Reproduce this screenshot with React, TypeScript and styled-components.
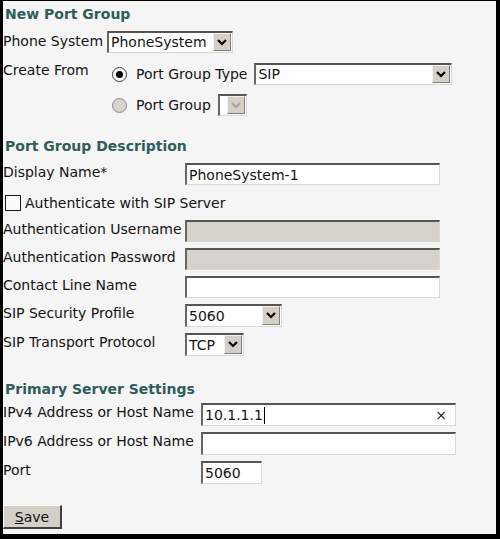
import React from 'react';
import styled, { createGlobalStyle } from 'styled-components';

const Global = createGlobalStyle`
  html, body { margin: 0; padding: 0; background: #000; }
  body { font-family: "DejaVu Sans", Verdana, sans-serif; font-size: 14px; color: #141414; }
`;

const Frame = styled.div`
  box-sizing: border-box;
  width: 500px;
  height: 539px;
  border-style: solid;
  border-color: #000;
  border-width: 1px 4px 5px 3px;
  background: #f5f5f5;
  display: flex;
  flex-direction: column;
  overflow: hidden;
`;

const Heading = styled.div<{ $top: number }>`
  margin: ${p => p.$top}px 0 0 2px;
  font-weight: bold;
  color: #2f5c5c;
  line-height: 18px;
`;

const Grid = styled.div<{ $label: number; $top: number; $gap: number }>`
  display: grid;
  grid-template-columns: ${p => p.$label}px 1fr;
  row-gap: ${p => p.$gap}px;
  margin-top: ${p => p.$top}px;
  align-items: start;
`;

const Label = styled.div<{ $offset?: number }>`
  line-height: 18px;
  white-space: nowrap;
  margin-top: ${p => p.$offset ?? 0}px;
`;

const Full = styled.div`
  grid-column: 1 / -1;
  display: flex;
  align-items: center;
  height: 23px;
  margin-left: 2px;
  gap: 4px;
`;

const Check = styled.span`
  box-sizing: border-box;
  width: 16px;
  height: 16px;
  border: 1px solid #1a1a1a;
  background: #fbfbfb;
`;

const Field = styled.div<{ $w: number; $h?: number; $disabled?: boolean }>`
  box-sizing: border-box;
  width: ${p => p.$w}px;
  height: ${p => p.$h ?? 22}px;
  display: flex;
  align-items: center;
  padding: 0 8px 0 2px;
  background: ${p => (p.$disabled ? '#d5d2cc' : '#fff')};
  border-style: solid;
  border-width: 2px 1px 1px 2px;
  border-color: #555 #d8d8d8 #d8d8d8 #666;
  white-space: nowrap;
`;

const Caret = styled.span`
  display: inline-block;
  width: 1px;
  height: 17px;
  background: #000;
  margin-left: 1px;
`;

const Clear = styled.span`
  margin-left: auto;
  font-size: 14px;
  color: #222;
`;

const SelectBox = styled.div<{ $w: number; $h: number }>`
  box-sizing: border-box;
  width: ${p => p.$w}px;
  height: ${p => p.$h}px;
  display: flex;
  background: #fff;
  border-style: solid;
  border-width: 2px 1px 1px 2px;
  border-color: #555 #d8d8d8 #d8d8d8 #666;
  padding: 0 1px 1px 0;
`;

const SelectText = styled.span`
  flex: 1;
  padding-left: 2px;
  line-height: 18px;
  align-self: center;
  white-space: nowrap;
  overflow: hidden;
`;

const DropButton = styled.span<{ $disabled?: boolean }>`
  box-sizing: border-box;
  width: 18px;
  flex: none;
  display: flex;
  align-items: center;
  justify-content: center;
  background: #d4d0c8;
  border-style: solid;
  border-width: 1px;
  border-color: #f2f2f2 #7f7f7f #7f7f7f #f2f2f2;
  color: ${p => (p.$disabled ? '#a8a49c' : '#000')};
`;

const RadioStack = styled.div`
  display: flex;
  flex-direction: column;
  gap: 9px;
  margin-left: 5px;
`;

const RadioRow = styled.div`
  display: flex;
  align-items: center;
  height: 22px;
`;

const Radio = styled.span<{ $on?: boolean }>`
  box-sizing: border-box;
  width: 15px;
  height: 15px;
  border-radius: 50%;
  border: 1px solid ${p => (p.$on ? '#3a3a3a' : '#8a8a8a')};
  background: ${p => (p.$on ? '#fff' : '#d9d5ce')};
  display: flex;
  align-items: center;
  justify-content: center;
  margin-right: 9px;
  &::after {
    content: '';
    display: ${p => (p.$on ? 'block' : 'none')};
    width: 7px;
    height: 7px;
    border-radius: 50%;
    background: #000;
  }
`;

const RadioText = styled.span`
  margin-right: 7px;
  white-space: nowrap;
`;

const Footer = styled.div`
  margin-top: 21px;
`;

const SaveButton = styled.button`
  box-sizing: border-box;
  width: 59px;
  height: 24px;
  font: inherit;
  color: #111;
  background: #d4d0c8;
  border-style: solid;
  border-width: 1px 2px 2px 1px;
  border-color: #fff #404040 #404040 #fff;
  padding: 0;
  u { text-decoration: underline; }
`;

const Chevron = () => (
  <svg width="10" height="7" viewBox="0 0 10 7">
    <polyline points="1,1 5,5 9,1" fill="none" stroke="currentColor" strokeWidth="2.2" />
  </svg>
);

const Select = ({ w, h = 22, value, disabled }: { w: number; h?: number; value: string; disabled?: boolean }) => (
  <SelectBox $w={w} $h={h}>
    <SelectText>{value}</SelectText>
    <DropButton $disabled={disabled}>
      <Chevron />
    </DropButton>
  </SelectBox>
);

export default function App() {
  return (
    <>
      <Global />
      <Frame>
        <Heading $top={4}>New Port Group</Heading>
        <Grid $label={104} $top={8} $gap={10}>
          <Label $offset={1}>Phone System</Label>
          <Select w={126} value="PhoneSystem" />
          <Label $offset={-2}>Create From</Label>
          <RadioStack>
            <RadioRow>
              <Radio $on />
              <RadioText>Port Group Type</RadioText>
              <Select w={198} value="SIP" />
            </RadioRow>
            <RadioRow>
              <Radio />
              <RadioText>Port Group</RadioText>
              <Select w={29} value="" disabled />
            </RadioRow>
          </RadioStack>
        </Grid>

        <Heading $top={21}>Port Group Description</Heading>
        <Grid $label={182} $top={8} $gap={6}>
          <Label>Display Name*</Label>
          <Field $w={255}>PhoneSystem-1</Field>
          <Full>
            <Check />
            <span>Authenticate with SIP Server</span>
          </Full>
          <Label>Authentication Username</Label>
          <Field $w={255} $disabled />
          <Label>Authentication Password</Label>
          <Field $w={255} $disabled />
          <Label>Contact Line Name</Label>
          <Field $w={255} />
          <Label>SIP Security Profile</Label>
          <Select w={97} h={23} value="5060" />
          <Label>SIP Transport Protocol</Label>
          <Select w={59} h={23} value="TCP" />
        </Grid>

        <Heading $top={24}>Primary Server Settings</Heading>
        <Grid $label={198} $top={5} $gap={6}>
          <Label>IPv4 Address or Host Name</Label>
          <Field $w={255} $h={23}>
            10.1.1.1
            <Caret />
            <Clear>×</Clear>
          </Field>
          <Label>IPv6 Address or Host Name</Label>
          <Field $w={255} $h={23} />
          <Label>Port</Label>
          <Field $w={61} $h={23}>5060</Field>
        </Grid>

        <Footer>
          <SaveButton type="button">
            <u>S</u>ave
          </SaveButton>
        </Footer>
      </Frame>
    </>
  );
}
